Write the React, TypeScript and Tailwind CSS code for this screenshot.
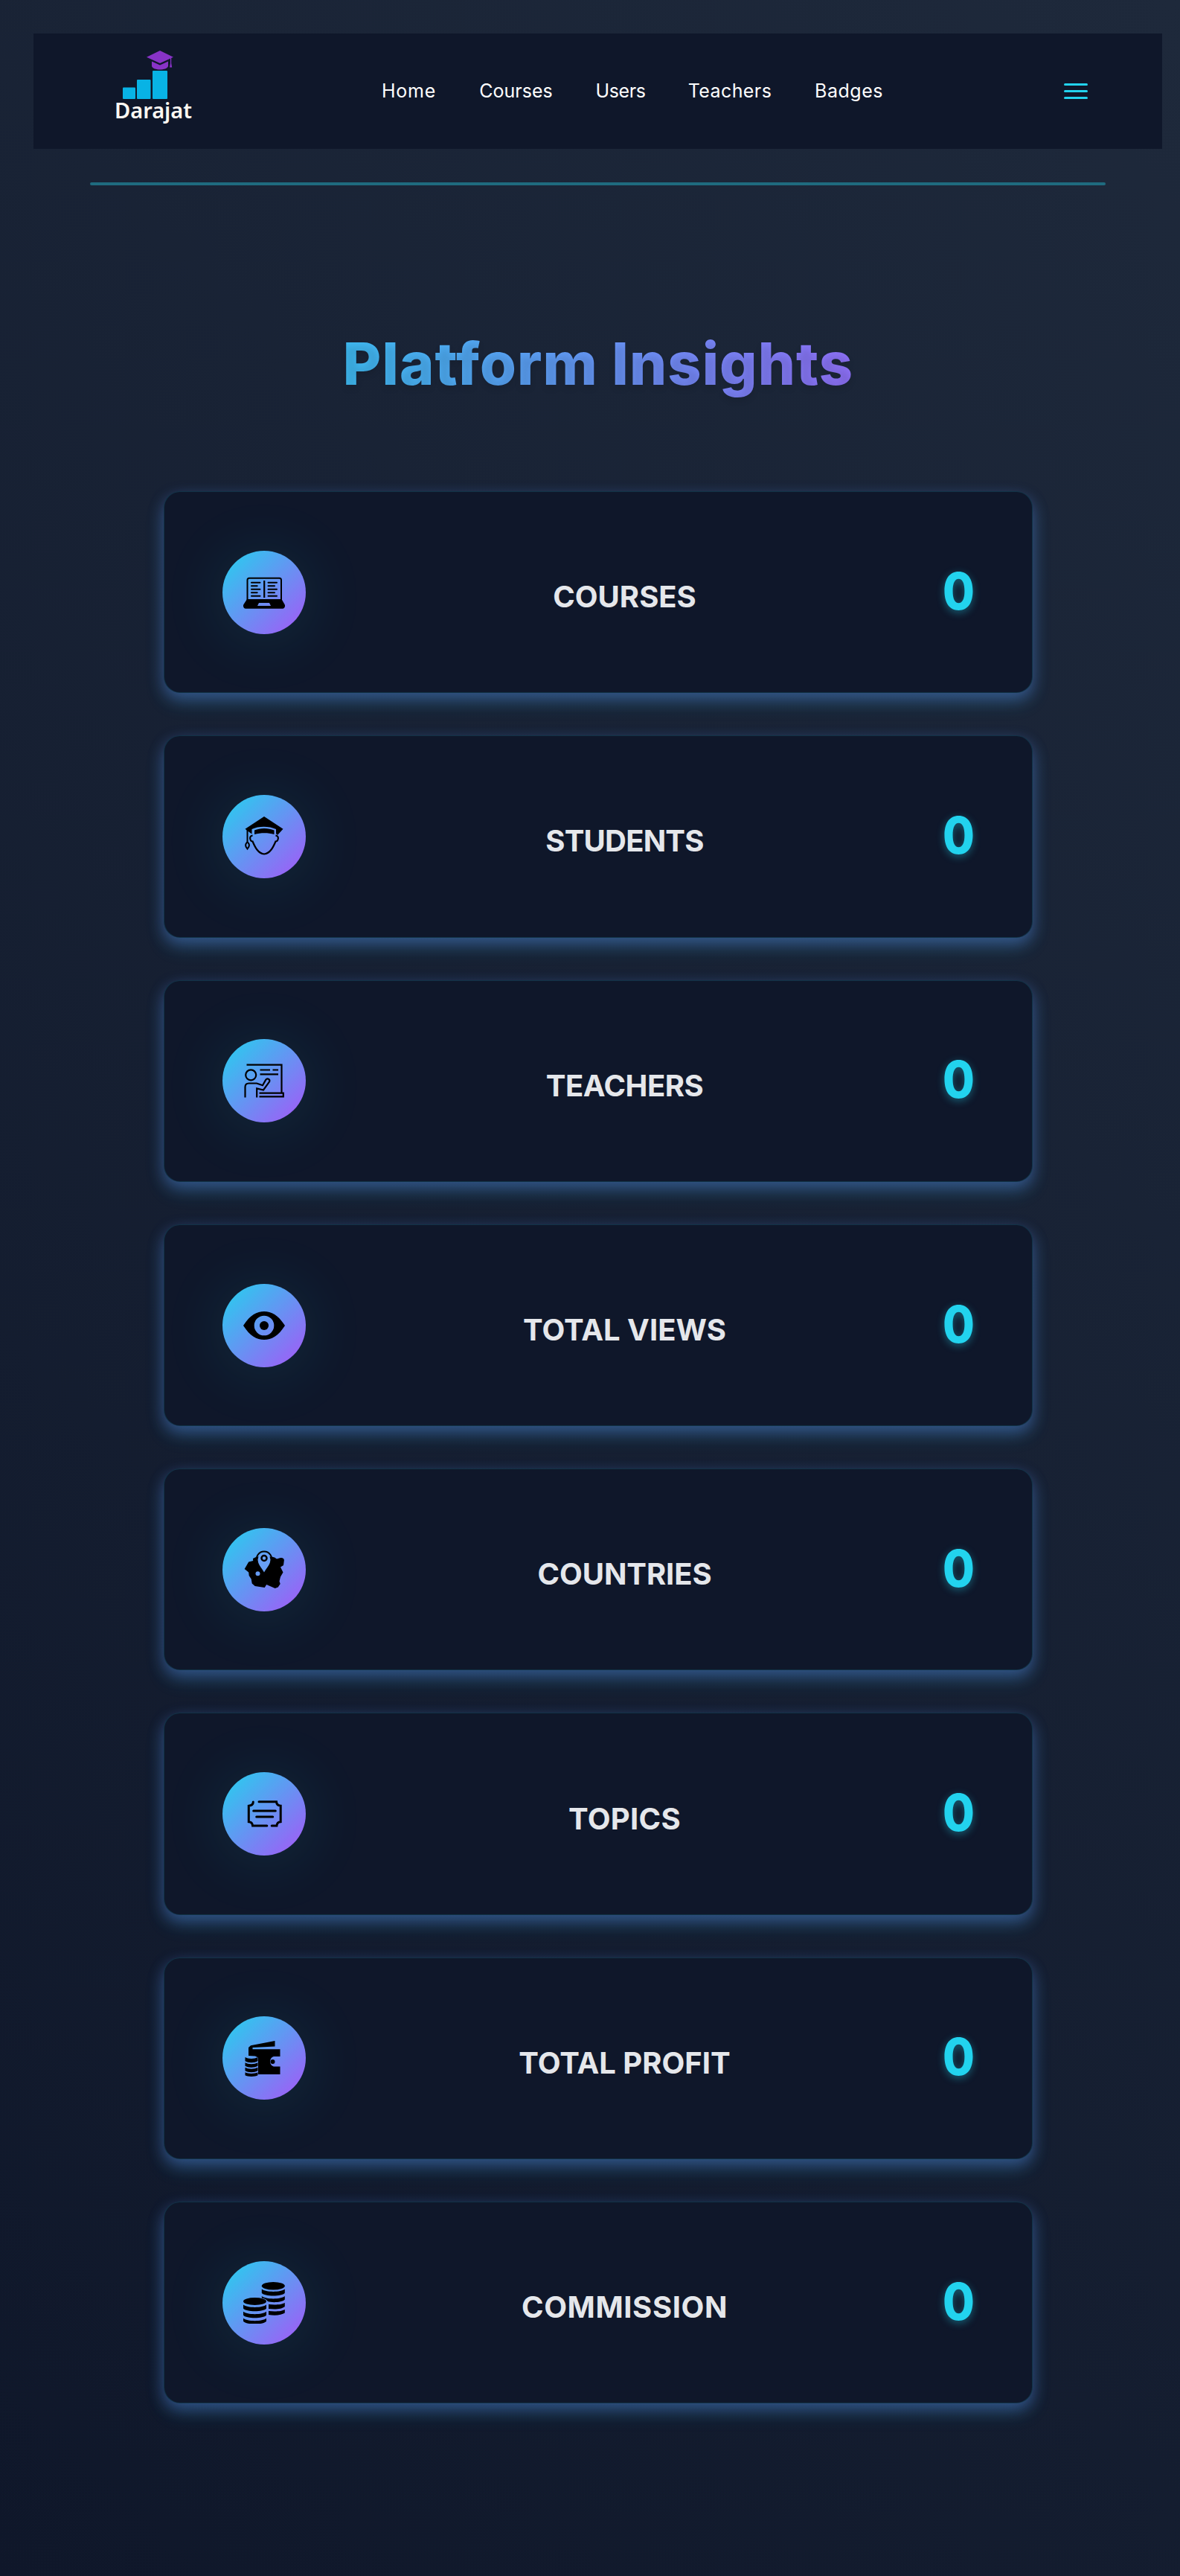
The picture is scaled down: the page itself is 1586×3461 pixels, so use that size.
import React from "react";

function CoursesIcon() {
  return (
    <svg viewBox="0 0 56 56" className="size-14" fill="none" stroke="#000" strokeWidth="2">
      <rect x="5.500" y="8.700" width="45.500" height="31" rx="2.500" />
      <path d="M28.200 12v23" strokeWidth="2.200" />
      <path d="M11 14.700h11.500M11 19.200h7.700M11 23.700h11.500M11 28.200h7.700M11 32.700h11.500M33.500 14.700H45M33.500 19.200h8.500M33.500 23.700H45M33.500 28.200h8.500M33.500 32.700H45" strokeLinecap="round" />
      <path d="M5 37h46.500l4.300 7.500c.8 2.500-.5 5.300-3 5.300H3.200c-2.500 0-3.800-2.800-3-5.300zM21 42l-2 4h18l-2-4z" fill="#000" fillRule="evenodd" stroke="none" />
    </svg>
  );
}

function StudentsIcon() {
  return (
    <svg viewBox="0 0 56 56" className="size-14">
      <path d="M28 1 53.500 17.700 46 26l-2-2v-6C35 13.500 20 13.500 11.500 18v6.500L8 22 2.500 17.700z" />
      <path d="M15 19.500c8-3.500 18-3.500 26.500 0v5.500c-8-2.500-18-2.500-26.500 0z" />
      <path d="M5.500 18v19" stroke="#000" strokeWidth="2" />
      <path d="M5.500 35.500c-2 1.500-2.700 4-2 6l2 3 2-3c.8-2 0-4.500-2-6z" fill="none" stroke="#000" strokeWidth="2" />
      <path d="M12.500 26.700c-3 .3-4 2.200-3 5.300.6 1.700 1.600 2.600 3 2.500 3 7 7 16 15.500 17 8.500-1 12.500-10 15.500-17 1.400.1 2.400-.8 3-2.500 1-3.100 0-5-3-5.300" fill="none" stroke="#000" strokeWidth="2.200" />
    </svg>
  );
}

function TeachersIcon() {
  return (
    <svg viewBox="0 0 56 56" className="size-14" fill="none" stroke="#000" strokeWidth="2.200">
      <path d="M4.500 6.700h47v38M22.500 13.500h13.500M39.500 13.500h7.500M22.500 19.300h24.500M21.500 44.700h32.300v4.600H21.500" />
      <circle cx="10.200" cy="20.300" r="7" />
      <path d="M2.500 50.500V36.500c0-3.300 2-5 5-5h10.500l8 2.700 4.300-7.500c2-2.700 6-.5 4.800 2.600L27 40.500l-8.800-2V50.500" />
    </svg>
  );
}

function ViewsIcon() {
  return (
    <svg viewBox="0 0 56 56" className="size-14">
      <path fillRule="evenodd" d="M0 28C9 14 18 9 28 9s19 5 28 19c-9 14-18 19-28 19S9 42 0 28zm28-13.300a13.300 13.300 0 1 0 0 26.600 13.300 13.300 0 0 0 0-26.600z" />
      <circle cx="28" cy="28" r="6" />
    </svg>
  );
}

function CountriesIcon() {
  return (
    <svg viewBox="0 0 56 56" className="size-14">
      <path d="m13 13 5-2.500h20l4 1 3 2 5-1.500c4 0 5.500 2 4.700 4.500l-.7 5.500-4 2.500 3.500 7-3.500 6-1.500 6 1.200 3.500-3 4.500-4 1.500-11.500-5-2.500 4-13-2-4-3.500-1-6-3-4.500-.5-4.500-5.500-4.500 5.500-9.500 6-1.500z" />
      <path d="M28 31.500c-4-7-8.500-11-8.500-17a8.500 8.500 0 0 1 17 0c0 6-4.500 10-8.500 17z" className="fill-[#68a0f5]" />
      <path d="M18.800 18a10.200 10.200 0 1 1 18.400 0" fill="none" stroke="#000" strokeWidth="2" />
      <circle cx="28" cy="12.500" r="3.500" fill="none" stroke="#000" strokeWidth="2.500" />
      <circle cx="19.500" cy="33.300" r="3" className="fill-[#659bf5]" />
    </svg>
  );
}

function TopicsIcon() {
  return (
    <svg viewBox="0 0 56 56" className="size-14" fill="none" stroke="#000" strokeWidth="3" strokeLinecap="round">
      <path d="M13.300 12c0 3-1.800 4.800-6 5.300v21.400c3.500.2 5 2 5.300 5.300h19.200M21 11.700h23.500c.2 3.300 1.800 5.300 5.700 5.500v21.500c-3.500.2-5 2-5.300 5.300h-6.700M13.700 24h29.600M17.700 32h22" />
    </svg>
  );
}

function ProfitIcon() {
  return (
    <svg viewBox="0 0 56 56" className="size-14">
      <path d="M7 25V14l3-2.700L42.500 5v7.500L12.500 14v2.300h37V26h-8.700a7.200 7.200 0 0 0 0 13.500h8.700V50H20V27.500l-4-2z" />
      <circle cx="39.500" cy="33" r="3" />
      <path d="M2.500 27c4 2.500 12.500 2.500 17 0v5.300c-4.500 2.500-13 2.500-17 0zm0 7.300c4 2.500 12.500 2.500 17 0v4.500c-4.500 2.500-13 2.500-17 0zm0 6.500c4 2.500 12.500 2.500 17 0v4.500c-4.500 2.500-13 2.500-17 0zm0 6.500c4 2.300 12.500 2.300 17 0v4c-3.500 2.300-13.500 2.300-17 0z" />
    </svg>
  );
}

function CommissionIcon() {
  return (
    <svg viewBox="0 0 56 56" className="size-14">
      <ellipse cx="40.300" cy="5.300" rx="15.500" ry="5.200" />
      <path d="M24.800 9.500c5 4.500 26 4.500 31 0v5.300c-4 5-27 5-31 0zm0 9.500c5 4.500 26 4.500 31 0v4.500c-4 4-17 4.500-23 2.500-2-3-5-4-8-4.500zM34 30c8 1 18 .5 21.800-2v5c-4 3.500-13 4-21.800 3zm0 9c8 1 18 .5 21.800-2v4.500c-4 3-13 4-21.800 2.500z" />
      <ellipse cx="15.500" cy="26" rx="15.500" ry="5" />
      <path d="M0 30.500c5 4.500 26 4.500 31 0v5c-4 5-27 5-31 0zm0 9.300c5 4.500 26 4.500 31 0v4.700c-4 5-27 5-31 0zm0 9c5 4.500 26 4.500 31 0v4c-4 5-27 5-31 0z" />
    </svg>
  );
}

const stats = [
  { label: "COURSES", tracking: "tracking-[0px]", Icon: CoursesIcon },
  { label: "STUDENTS", tracking: "tracking-[-0.8px]", Icon: StudentsIcon },
  { label: "TEACHERS", tracking: "tracking-[-0.5px]", Icon: TeachersIcon },
  { label: "TOTAL VIEWS", tracking: "tracking-[0px]", Icon: ViewsIcon },
  { label: "COUNTRIES", tracking: "tracking-[-0.1px]", Icon: CountriesIcon },
  { label: "TOPICS", tracking: "tracking-[0.3px]", Icon: TopicsIcon },
  { label: "TOTAL PROFIT", tracking: "tracking-[0px]", Icon: ProfitIcon },
  { label: "COMMISSION", tracking: "tracking-[0.6px]", Icon: CommissionIcon },
];

const links = [
  { label: "Home", box: "w-[75px] tracking-[0.8px]" },
  { label: "Courses", box: "w-[101px] tracking-[0px]" },
  { label: "Users", box: "w-[68px] tracking-[-0.4px]" },
  { label: "Teachers", box: "w-[114px] tracking-[0.4px]" },
  { label: "Badges", box: "w-[94px] tracking-[0.5px]" },
];

function Logo() {
  return (
    <div className="flex w-[102px] flex-col items-center">
      <svg viewBox="0 0 102 66" className="h-[66px] w-[102px]">
        <g className="fill-[#8833c7]">
          <path d="m60 0 18 8.700L60 17 42 8.700z" />
          <path d="M49 14.500 60 19.500l11-5V21c-2 6-20 6-22 0z" />
          <path d="M74 9.500h1.200V17l1 5.500h-3.200l1-5.500z" />
        </g>
        <g className="fill-[#08b3e5]">
          <rect x="10" y="49.500" width="17" height="15.500" rx="1" />
          <rect x="29" y="39" width="18.500" height="26" rx="1" />
          <rect x="50" y="27" width="20" height="38" rx="1" />
        </g>
      </svg>
      <span className="-mt-[4px] font-['Noto_Sans',sans-serif] text-[29px] leading-[36px] font-semibold text-[#fcf8f2]">Darajat</span>
    </div>
  );
}

export default function App() {
  return (
    <div className="min-h-[3461px] w-[1586px] overflow-hidden bg-[linear-gradient(45deg,#0f172a,#1e293b)] pt-[45px] font-['Inter',sans-serif]">
      <header className="ml-[45px] flex h-[155px] w-[1517px] items-start bg-[#0f172a] pl-[110px]">
        <div className="mt-[23px]">
          <Logo />
        </div>
        <nav className="ml-[255px] flex h-full items-center gap-[56px]">
          {links.map((l) => (
            <a key={l.label} className={`${l.box} text-center text-[25px] whitespace-nowrap text-white`}>
              {l.label}
            </a>
          ))}
        </nav>
        <button className="mt-[67px] ml-[242px] flex w-8 flex-col gap-[6px]" aria-label="Menu">
          <span className="h-[3px] rounded-sm bg-[#22d3ee]" />
          <span className="h-[3px] rounded-sm bg-[#22d3ee]" />
          <span className="h-[3px] rounded-sm bg-[#22d3ee]" />
        </button>
      </header>
      <div className="mt-[45px] ml-[121px] h-1 w-[1365px] rounded-sm bg-[#1f6b7f]" />
      <main className="mt-[179px] ml-[220px] w-[1168px]">
        <h1 className="bg-[linear-gradient(90deg,#22d3ee,#a855f7)] bg-clip-text text-center text-[79px] leading-[120px] font-extrabold tracking-[1.1px] whitespace-nowrap text-transparent [text-shadow:0_5px_8px_rgba(0,0,0,0.1)]">
          Platform Insights
        </h1>
        <div className="mt-[112px] flex flex-col gap-[57px]">
          {stats.map(({ label, tracking, Icon }) => (
            <section
              key={label}
              className="flex h-[271.3px] items-center justify-between rounded-[22px] border border-[#22d3ee]/15 bg-[#0f172a] px-[78px] shadow-[0_13px_26px_rgba(34,211,238,0.17),0_7px_20px_rgba(115,118,246,0.36)]"
            >
              <div className="flex size-28 items-center justify-center rounded-full bg-[linear-gradient(135deg,#22d3ee,#a855f7)] shadow-[0_6px_90px_rgba(34,211,238,0.12)]">
                <Icon />
              </div>
              <h2 className={`${tracking} pt-[13px] text-[40px] font-bold whitespace-nowrap text-[#e5e7eb]`}>{label}</h2>
              <span className="flex w-[41px] scale-x-90 justify-center pb-[3px] text-[69px] leading-none font-extrabold text-[#22d3ee] [text-shadow:0_3px_11px_rgba(34,211,238,0.4)]">
                0
              </span>
            </section>
          ))}
        </div>
      </main>
    </div>
  );
}
